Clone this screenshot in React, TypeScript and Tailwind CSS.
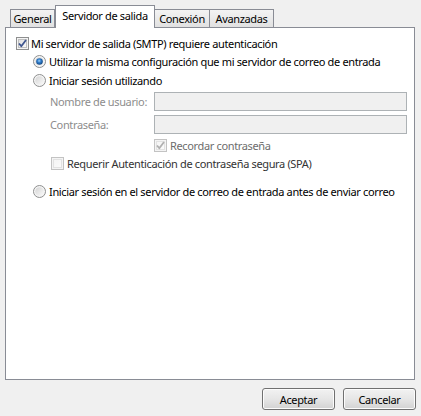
import React from "react";

function CheckBox({ checked, disabled }: { checked?: boolean; disabled?: boolean }) {
    const border = disabled ? "#c3c3c3" : "#8e8f8f";
    const tick = disabled ? "#b0b0b0" : "#3f568f";
    return (
        <svg width="13" height="13" viewBox="0 0 13 13" className="shrink-0">
            <defs>
                <linearGradient id={disabled ? "cbd" : "cb"} x1="0" y1="0" x2="1" y2="1">
                    <stop offset="0" stopColor={disabled ? "#f4f4f4" : "#dedede"} />
                    <stop offset="1" stopColor="#fbfbfb" />
                </linearGradient>
            </defs>
            <rect x="0.5" y="0.5" width="12" height="12" fill="#f4f4f4" stroke={border} />
            <rect x="2.5" y="2.5" width="8" height="8" fill={`url(#${disabled ? "cbd" : "cb"})`} stroke={disabled ? "#e2e2e2" : "#c0c0c0"} strokeWidth="1" />
            {checked && (
                <path d="M3 6.5 L5.3 9.2 L10 3" fill="none" stroke={tick} strokeWidth="1.8" strokeLinejoin="round" />
            )}
        </svg>
    );
}

function Radio({ checked }: { checked?: boolean }) {
    return (
        <svg width="13" height="13" viewBox="0 0 13 13" className="shrink-0">
            <defs>
                <linearGradient id="rb" x1="0" y1="0" x2="1" y2="1">
                    <stop offset="0" stopColor="#d4d4d4" />
                    <stop offset="1" stopColor="#fafafa" />
                </linearGradient>
                <radialGradient id="rd" cx="0.45" cy="0.4" r="0.6">
                    <stop offset="0" stopColor="#9fd2f5" />
                    <stop offset="0.45" stopColor="#2f7ccc" />
                    <stop offset="1" stopColor="#14467e" />
                </radialGradient>
            </defs>
            <circle cx="6.5" cy="6.5" r="6" fill="#f4f4f4" stroke="#8e8f8f" />
            <circle cx="6.5" cy="6.5" r="4.3" fill="url(#rb)" />
            {checked && <circle cx="6.5" cy="6.5" r="3.3" fill="url(#rd)" />}
        </svg>
    );
}

export default function App() {
    return (
        <div className="w-[421px] h-[416px] bg-[#f0f0f0] overflow-hidden text-[11px] tracking-[-0.35px] leading-none whitespace-nowrap text-black font-['Noto_Sans',sans-serif]">
            {/* Tabs */}
            <div className="flex items-end pl-[10px] pt-[5px] h-[27px]">
                <div className="h-[18px] w-[45px] border border-b-0 border-[#898c95] bg-gradient-to-b from-[#f3f3f3] to-[#e1e1e1] flex items-center justify-center">
                    General
                </div>
                <div className="relative z-10 -mb-px h-[23px] w-[100px] border border-b-0 border-[#898c95] bg-white flex items-center justify-center pb-[3px]">
                    Servidor de salida
                </div>
                <div className="h-[18px] w-[55px] border border-l-0 border-b-0 border-[#898c95] bg-gradient-to-b from-[#f3f3f3] to-[#e1e1e1] flex items-center justify-center">
                    Conexión
                </div>
                <div className="h-[18px] w-[64px] border border-l-0 border-b-0 border-[#898c95] bg-gradient-to-b from-[#f3f3f3] to-[#e1e1e1] flex items-center justify-center">
                    Avanzadas
                </div>
            </div>

            {/* Panel */}
            <div className="ml-[5px] w-[410px] h-[353px] border border-[#898c95] bg-white pl-[10px] pt-[6px]">
                <div className="flex items-center h-[18px] gap-[2px]">
                    <CheckBox checked />
                    <span>Mi servidor de salida (SMTP) requiere autenticación</span>
                </div>
                <div className="flex items-center h-[18px] gap-[3px] pl-[17px]">
                    <Radio checked />
                    <span>Utilizar la misma configuración que mi servidor de correo de entrada</span>
                </div>
                <div className="flex items-center h-[18px] gap-[3px] pl-[17px] mt-px">
                    <Radio />
                    <span>Iniciar sesión utilizando</span>
                </div>

                <div className="flex items-center h-[19px] mt-[3px] pl-[34px]">
                    <span className="w-[104px] text-[#8d8d8d]">Nombre de usuario:</span>
                    <div className="w-[253px] h-[19px] border border-[#adb2b5] bg-[#f0f0f0]" />
                </div>
                <div className="flex items-center h-[19px] mt-[4px] pl-[34px]">
                    <span className="w-[104px] text-[#8d8d8d]">Contraseña:</span>
                    <div className="w-[253px] h-[19px] border border-[#adb2b5] bg-[#f0f0f0]" />
                </div>
                <div className="flex items-center h-[18px] mt-[2px] pl-[138px] gap-[3px]">
                    <CheckBox checked disabled />
                    <span className="text-[#6d6d6d]">Recordar contraseña</span>
                </div>
                <div className="flex items-center h-[18px] pl-[35px] gap-[3px]">
                    <CheckBox disabled />
                    <span className="text-[#333]">Requerir Autenticación de contraseña segura (SPA)</span>
                </div>

                <div className="flex items-center h-[18px] gap-[3px] pl-[17px] mt-[10px]">
                    <Radio />
                    <span>Iniciar sesión en el servidor de correo de entrada antes de enviar correo</span>
                </div>
            </div>

            {/* Buttons */}
            <div className="flex justify-end gap-[8px] pr-[5px] mt-[8px]">
                {["Aceptar", "Cancelar"].map((label) => (
                    <button
                        key={label}
                        className="w-[73px] h-[22px] rounded-[3px] border border-[#707070] bg-gradient-to-b from-[#f2f2f2] via-[#e6e6e6] to-[#d2d2d2] shadow-[inset_0_0_0_1px_#fcfcfc] text-black"
                    >
                        {label}
                    </button>
                ))}
            </div>
        </div>
    );
}
